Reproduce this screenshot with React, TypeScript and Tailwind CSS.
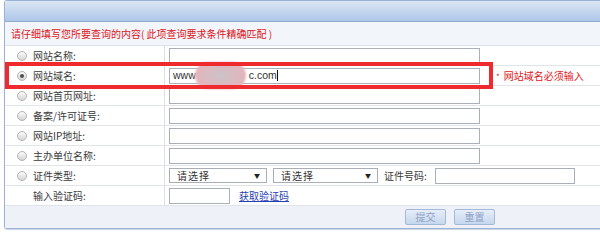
const Radio = ({ checked = false }: { checked?: boolean }) => (
  <span className="w-[10px] h-[10px] rounded-full border border-[#b4b4b4] bg-linear-to-b from-[#fbfbfb] to-[#d6d6d6] flex items-center justify-center shrink-0">
    {checked && <span className="w-[4px] h-[4px] rounded-full bg-[#505050]" />}
  </span>
);

const TextBox = ({ w = "w-[311px]", children }: { w?: string; children?: React.ReactNode }) => (
  <div className={`${w} h-[16px] border border-[#aab0b8] bg-white flex items-center pl-[3px] text-[10.5px] text-[#333] font-['Liberation_Sans',sans-serif]`}>
    {children}
  </div>
);

const Select = ({ w }: { w: string }) => (
  <div className={`${w} h-[15px] border border-[#a9afb6] bg-white flex items-center justify-between pl-[7px] pr-[6px]`}>
    <span className="text-[10px] text-[#333] tracking-[1px]">请选择</span>
    <span className="text-[6px] text-[#222]">▼</span>
  </div>
);

const Row = ({
  label,
  radio = true,
  checked = false,
  children,
}: {
  label: string;
  radio?: boolean;
  checked?: boolean;
  children?: React.ReactNode;
}) => (
  <div className="flex h-[20px] border-b border-[#e1e4e8]">
    <div className="w-[160px] shrink-0 border-r border-[#dcdfe3] flex items-center pl-[12px] gap-[6px]">
      {radio ? <Radio checked={checked} /> : <span className="w-[10px]" />}
      <span className="text-[10px] text-[#3a3a3a]">{label}</span>
    </div>
    <div className="flex items-center pl-[4px] gap-[6px]">{children}</div>
  </div>
);

export default function App() {
  return (
    <div className="w-[600px] h-[240px] bg-white relative overflow-hidden font-['Noto_Sans_CJK_SC',sans-serif]">
      <div className="ml-[4px] w-[640px] border-l border-t border-b border-[#9cb2d2] rounded-tl-[3px] rounded-bl-[3px] shadow-[0_1px_1px_#c9d5e6]">
        <div className="h-[21px] bg-linear-to-b from-[#dbe6f5] to-[#adc6e8] border-b border-[#93accf]" />
        <div className="h-[24px] bg-[#f2f5fa] border-b border-[#dfe3e8] flex items-center pl-[6px]">
          <span className="text-[10px] text-[#e0161b]">
            请仔细填写您所要查询的内容( 此项查询要求条件精确匹配 )
          </span>
        </div>
        <Row label="网站名称:">
          <TextBox />
        </Row>
        <Row label="网站域名:" checked>
          <TextBox>
            <span>www</span>
            <span className="inline-block w-[53px]" />
            <span>c.com</span>
            <span className="w-px h-[11px] bg-[#111]" />
          </TextBox>
          <span className="ml-[10px] text-[10px] text-[#e0161b]">
            <span className="text-[8px] mr-[4px]">*</span>网站域名必须输入
          </span>
        </Row>
        <Row label="网站首页网址:">
          <TextBox />
        </Row>
        <Row label="备案/许可证号:">
          <TextBox />
        </Row>
        <Row label="网站IP地址:">
          <TextBox />
        </Row>
        <Row label="主办单位名称:">
          <TextBox />
        </Row>
        <Row label="证件类型:">
          <div className="flex items-center gap-[6px]">
            <Select w="w-[98px]" />
            <Select w="w-[105px]" />
          </div>
          <span className="text-[10px] text-[#3a3a3a]">证件号码:</span>
          <div className="ml-[2px]">
            <TextBox w="w-[140px]" />
          </div>
        </Row>
        <Row label="输入验证码:" radio={false}>
          <TextBox w="w-[61px]" />
          <a className="ml-[3px] text-[10px] text-[#2a3fb4] underline cursor-pointer">获取验证码</a>
        </Row>
        <div className="h-[22px] bg-[#eef2f8] flex items-center gap-[8px] pl-[400px]">
          <button className="w-[41px] h-[16px] rounded-[2px] border border-[#a5b9d6] bg-linear-to-b from-[#e6eef9] to-[#c6d7ee] text-[10px] text-[#8ea3c6] leading-none">
            提交
          </button>
          <button className="w-[41px] h-[16px] rounded-[2px] border border-[#a5b9d6] bg-linear-to-b from-[#e6eef9] to-[#c6d7ee] text-[10px] text-[#8ea3c6] leading-none">
            重置
          </button>
        </div>
      </div>

      <div className="absolute left-[195px] top-[62px] w-[51px] h-[27px] rounded-full bg-radial from-[#cbc3c9] via-[#dcb9c0] to-[#f0a9b2] blur-[1px]" />
      <div className="absolute left-[5px] top-[62px] w-[488px] h-[27px] border-[4px] border-[#ee2a2e]" />
    </div>
  );
}
